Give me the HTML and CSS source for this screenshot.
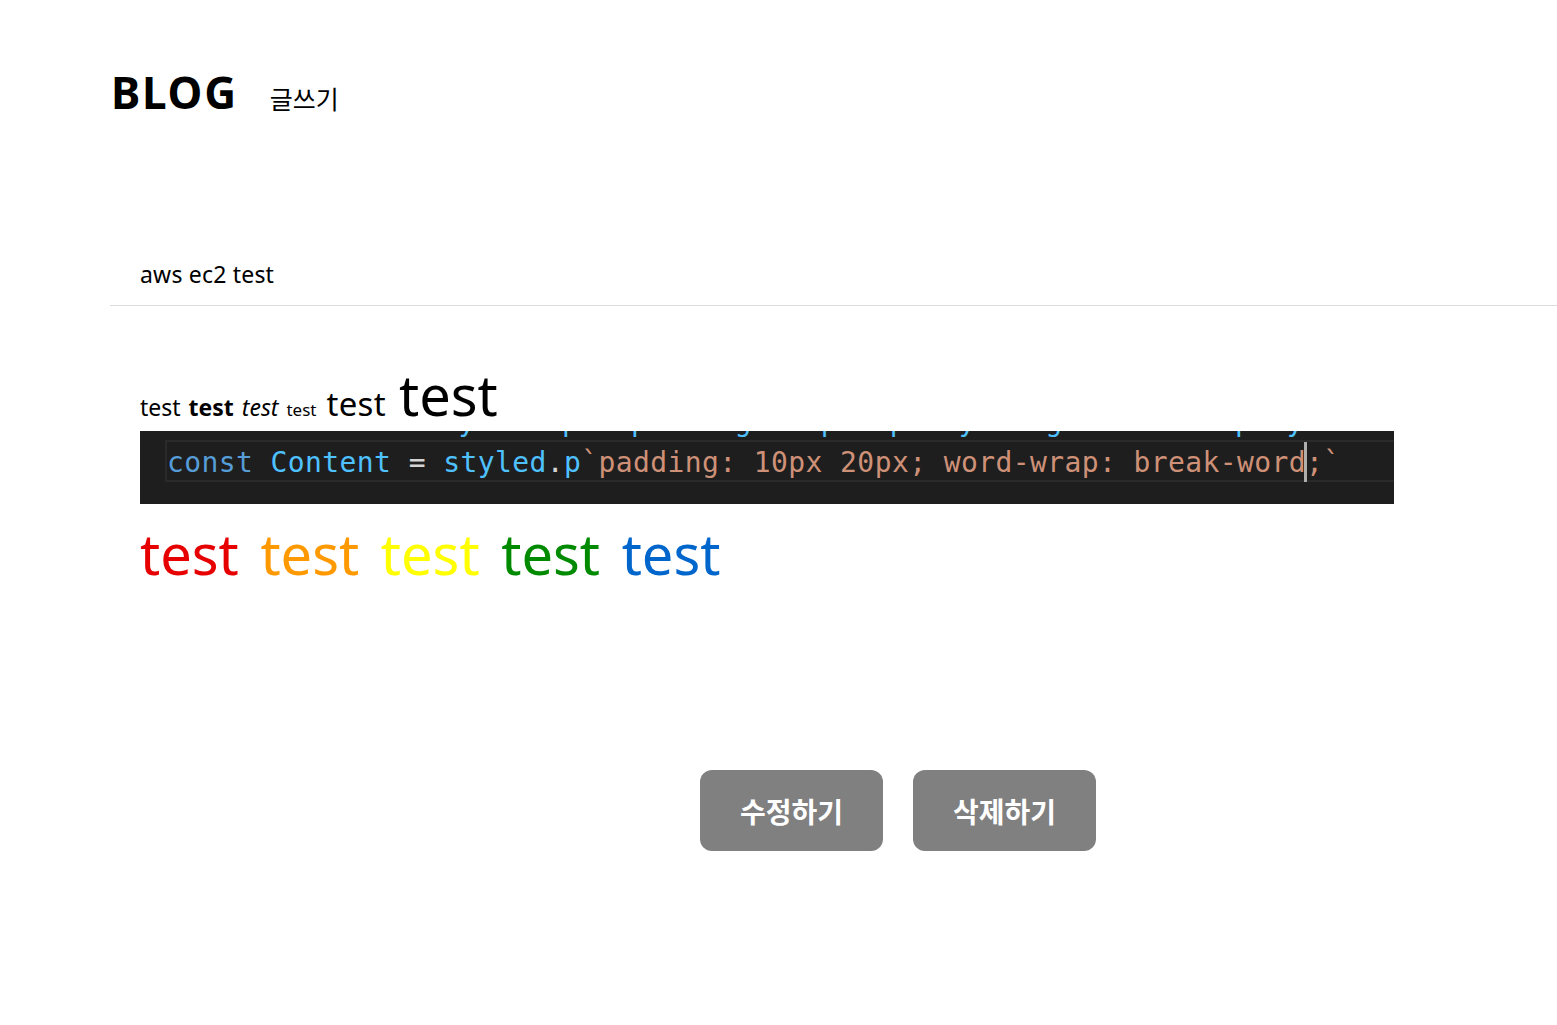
FILE: index.html
```html
<!DOCTYPE html>
<html lang="ko">
<head>
<meta charset="utf-8">
<title>BLOG</title>
<link rel="stylesheet" href="styles.css">
</head>
<body>
<header class="header">
  <h1 class="logo">BLOG</h1>
  <a class="write" href="#">글쓰기</a>
</header>
<main class="post">
  <div class="post-title">aws ec2 test</div>
  <div class="post-body">
    <p class="mixed">test <b>test</b> <i>test</i> <span class="small">test</span> <span class="mid">test</span> <span class="big">test</span></p>
    <div class="code">
      <div class="code-prev">                 y     p   p     g    p   p   y    g          p  y</div>
      <div class="code-line"><span class="kw">const</span> <span class="id">Content</span> <span class="op">=</span> <span class="id">styled</span><span class="op">.</span><span class="id">p</span><span class="str">`padding: 10px 20px; word-wrap: break-word<span class="caret"></span>;`</span></div>
    </div>
    <p class="rainbow"><span class="c-red">test</span> <span class="c-orange">test</span> <span class="c-yellow">test</span> <span class="c-green">test</span> <span class="c-blue">test</span></p>
  </div>
  <div class="actions">
    <button class="btn" type="button">수정하기</button>
    <button class="btn" type="button">삭제하기</button>
  </div>
</main>
</body>
</html>
```
FILE: styles.css
```css
html, body {
  margin: 0;
  padding: 0;
  background: #fff;
}
body {
  font-family: "Noto Sans", "Noto Sans CJK KR", sans-serif;
  color: #000;
}
.header {
  display: flex;
  align-items: baseline;
  gap: 32px;
  padding: 70px 0 0 111px;
  height: 150px;
  box-sizing: border-box;
}
.logo {
  margin: 0;
  font-size: 44px;
  font-weight: 700;
  line-height: 1;
  letter-spacing: 1.8px;
}
.write {
  font-family: "Noto Sans CJK KR", sans-serif;
  font-size: 25px;
  color: #000;
  text-decoration: none;
}
.post {
  margin-left: 110px;
}
.post-title {
  padding: 110px 0 17px 30px;
  font-size: 23px;
  line-height: 28px;
  letter-spacing: 0.2px;
  border-bottom: 1px solid #dcdcdc;
}
.post-body {
  padding: 60px 0 0 30px;
}
.mixed {
  margin: 0;
  font-size: 23px;
  line-height: 1;
  word-spacing: 2px;
}
.small { font-size: 17px; }
.mid { font-size: 33px; margin-left: 2px; letter-spacing: 0.3px; }
.big { font-size: 56px; margin-left: 5px; }
.code {
  width: 1254px;
  height: 73px;
  margin-top: 9px;
  background: #1e1e1e;
  overflow: hidden;
  font-family: "DejaVu Sans Mono", "Liberation Mono", monospace;
  font-size: 28px;
  letter-spacing: 0.4px;
  box-sizing: border-box;
  padding-left: 25px;
}
.code-prev {
  height: 16px;
  line-height: 16px;
  margin-top: -17px;
  color: #4fc1ff;
  white-space: pre;
}
.code-line {
  margin-top: 10px;
  height: 38px;
  line-height: 36px;
  border: 2px solid #2a2a2a;
  border-right: none;
  white-space: pre;
}
.kw { color: #569cd6; }
.id { color: #4fc1ff; }
.op { color: #d4d4d4; }
.str { color: #ce9178; }
.caret {
  display: inline-block;
  width: 3px;
  height: 40px;
  margin: 0 -1px 0 -2px;
  vertical-align: -10px;
  background: #aeafad;
}
.rainbow {
  margin: 16px 0 0;
  font-size: 56px;
  line-height: 1.2;
  word-spacing: 7px;
}
.c-red { color: #e60000; }
.c-orange { color: #ff9900; }
.c-yellow { color: #ffff00; }
.c-green { color: #008a00; }
.c-blue { color: #0066cc; }
.actions {
  display: flex;
  gap: 30px;
  padding: 183px 0 0 590px;
}
.btn {
  width: 183px;
  height: 81px;
  border: none;
  border-radius: 12px;
  background: #808080;
  color: #fff;
  font-family: "Noto Sans CJK KR", sans-serif;
  font-size: 28px;
  font-weight: 700;
}
```
